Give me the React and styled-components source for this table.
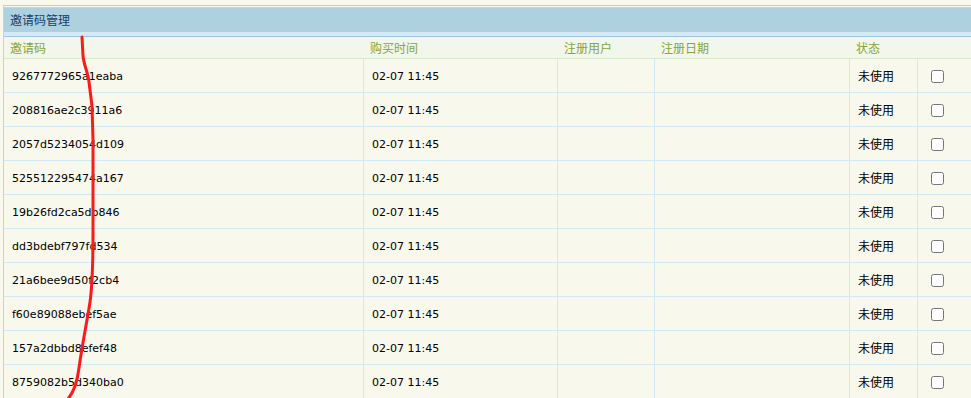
import React from "react";
import styled, { createGlobalStyle } from "styled-components";

const Global = createGlobalStyle`
  html, body { margin: 0; padding: 0; background: #f8f8ec; overflow: hidden; }
  body { padding: 5px 0 0 3px; font-family: "DejaVu Sans", "Noto Sans CJK SC", sans-serif; }
`;

const Panel = styled.div`
  position: relative;
  width: 1000px;
  border-top: 1px solid #b4d0dc;
  border-left: 1px solid #b9d7e6;
  background: #f8f8ec;
`;

const TitleBar = styled.div`
  height: 25px;
  margin-top: 1px;
  background: #aed1df;
  border-bottom: 4px solid #d6eaf5;
  box-shadow: inset 0 1px 0 #b8d8e4;
  display: flex;
  align-items: center;
  padding-left: 6px;
`;

const Title = styled.span`
  font-family: "Noto Sans CJK SC", sans-serif;
  font-size: 12px;
  color: #18406a;
  line-height: 1;
`;

const Grid = styled.div`
  display: grid;
  grid-template-columns: 360px 194px 97px 195px 68px 1fr;
  border-top: 1px solid #9dc6ea;
`;

const HeadCell = styled.div`
  box-sizing: border-box;
  height: 22px;
  background: #f2f6eb;
  border-bottom: 1px solid #d6e9cc;
  padding-left: 6px;
  display: flex;
  align-items: center;
  font-family: "Noto Sans CJK SC", sans-serif;
  font-size: 12px;
  color: #86a53a;
`;

const Cell = styled.div`
  box-sizing: border-box;
  height: 34px;
  padding-top: ${(p) => (p.$cjk ? "0" : "1px")};
  border-bottom: 1px solid #d2e8f3;
  border-right: ${(p) => (p.$last ? "none" : "1px solid #d2e8f3")};
  padding-left: ${(p) => (p.$check ? "9px" : "8px")};
  display: flex;
  align-items: center;
  font-family: ${(p) =>
    p.$cjk ? `"Noto Sans CJK SC", sans-serif` : `"DejaVu Sans", sans-serif`};
  font-size: ${(p) => (p.$cjk ? "12px" : "11px")};
  color: #000;
`;

const Check = styled.input`
  width: 13px;
  height: 13px;
  margin: 0 0 0 4px;
`;

const Scribble = styled.svg`
  position: absolute;
  left: -4px;
  top: -6px;
  pointer-events: none;
`;

const codes = [
  "9267772965a1eaba",
  "208816ae2c3911a6",
  "2057d5234054d109",
  "525512295474a167",
  "19b26fd2ca5db846",
  "dd3bdebf797fd534",
  "21a6bee9d50f2cb4",
  "f60e89088ebef5ae",
  "157a2dbbd8efef48",
  "8759082b5d340ba0",
];

export default function App() {
  return (
    <>
      <Global />
      <Panel>
        <TitleBar>
          <Title>邀请码管理</Title>
        </TitleBar>
        <Grid>
          <HeadCell>邀请码</HeadCell>
          <HeadCell>购买时间</HeadCell>
          <HeadCell>注册用户</HeadCell>
          <HeadCell>注册日期</HeadCell>
          <HeadCell>状态</HeadCell>
          <HeadCell />
          {codes.map((c) => (
            <React.Fragment key={c}>
              <Cell>{c}</Cell>
              <Cell>02-07 11:45</Cell>
              <Cell />
              <Cell />
              <Cell $cjk>未使用</Cell>
              <Cell $last $check>
                <Check type="checkbox" />
              </Cell>
            </React.Fragment>
          ))}
        </Grid>
        <Scribble width="120" height="410" viewBox="0 0 120 410">
          <path
            d="M82,37 L83,56 C84,66 88,72 89,82 L92,106 L93,140 L93,232 C93,262 92,288 90,302 C87,322 82,345 79,368 C77,384 73,393 68,399"
            fill="none"
            stroke="#ff1a1a"
            strokeWidth="3"
            strokeLinecap="round"
            strokeLinejoin="round"
          />
        </Scribble>
      </Panel>
    </>
  );
}
